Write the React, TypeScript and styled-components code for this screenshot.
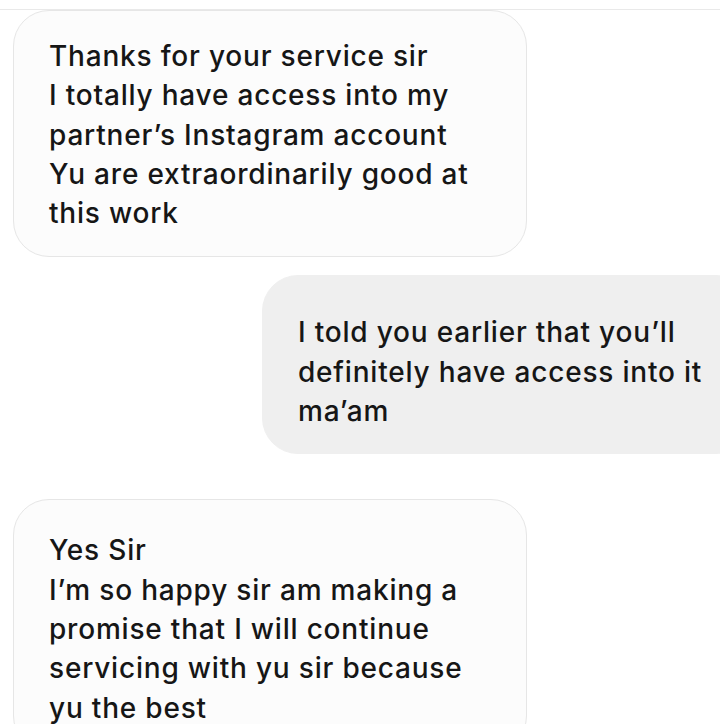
import React from 'react'
import styled, { createGlobalStyle } from 'styled-components'

const GlobalStyle = createGlobalStyle`
  html, body {
    margin: 0;
    padding: 0;
    background: #ffffff;
  }
  body {
    font-family: Inter, Roboto, 'Liberation Sans', sans-serif;
  }
`

interface Message {
  id: number
  fromMe: boolean
  lines: string[]
}

const messages: Message[] = [
  {
    id: 1,
    fromMe: false,
    lines: [
      'Thanks for your service sir',
      'I totally have access into my',
      'partner\u2019s Instagram account',
      'Yu are extraordinarily good at',
      'this work',
    ],
  },
  {
    id: 2,
    fromMe: true,
    lines: [
      'I told you earlier that you\u2019ll',
      'definitely have access into it',
      'ma\u2019am',
    ],
  },
  {
    id: 3,
    fromMe: false,
    lines: [
      'Yes Sir',
      'I\u2019m so happy sir am making a',
      'promise that I will continue',
      'servicing with yu sir because',
      'yu the best',
    ],
  },
]

const App: React.FC = () => {
  return (
    <>
      <GlobalStyle />
      <StyledPage>
        <StyledTopBar />
        <StyledThread>
          {messages.map((m) => (
            <StyledBubble key={m.id} $fromMe={m.fromMe}>
              {m.lines.map((line, i) => (
                <StyledLine key={i}>{line}</StyledLine>
              ))}
            </StyledBubble>
          ))}
        </StyledThread>
      </StyledPage>
    </>
  )
}

const StyledPage = styled.div`
  width: 720px;
  height: 724px;
  overflow: hidden;
  background: #ffffff;
`

const StyledTopBar = styled.div`
  height: 9px;
  border-bottom: 1px solid #e9e9e9;
`

const StyledThread = styled.div`
  display: flex;
  flex-direction: column;
`

const StyledBubble = styled.div<{ $fromMe: boolean }>`
  box-sizing: border-box;
  border-radius: 36px;
  align-self: ${(props) => (props.$fromMe ? 'flex-end' : 'flex-start')};
  background: ${(props) => (props.$fromMe ? '#efefef' : '#fcfcfc')};
  border: 1px solid ${(props) => (props.$fromMe ? '#efefef' : '#e6e6e6')};
  width: ${(props) => (props.$fromMe ? '490px' : '514px')};
  margin-left: ${(props) => (props.$fromMe ? '0' : '13px')};
  margin-right: ${(props) => (props.$fromMe ? '-32px' : '0')};
  padding: ${(props) => (props.$fromMe ? '37px 20px 22px 35px' : '26px 20px 23px 35px')};

  &:nth-child(2) {
    margin-top: 18px;
  }
  &:nth-child(3) {
    margin-top: 45px;
    padding-top: 31px;
  }
`

const StyledLine = styled.div`
  font-size: 28px;
  font-weight: 500;
  letter-spacing: 0.8px;
  line-height: 39.3px;
  color: #161616;
  white-space: nowrap;
`

export default App
